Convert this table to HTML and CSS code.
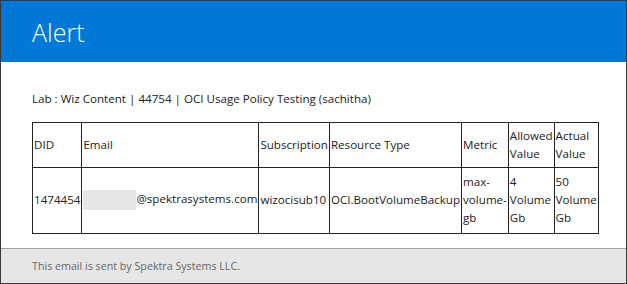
FILE: index.html
```html
<!DOCTYPE html>
<html lang="en">
<head>
    <meta charset="UTF-8">
    <meta name="viewport" content="width=device-width, initial-scale=1.0">
    <title>Alert</title>
    <link rel="stylesheet" href="styles.css">
</head>
<body>
    <div class="mail">
        <div class="header">
            <h1>Alert</h1>
        </div>
        <div class="content">
            <p class="lab">Lab : Wiz Content | 44754 | OCI Usage Policy Testing (sachitha)</p>
            <table class="usage">
                <tr>
                    <td>DID</td>
                    <td>Email</td>
                    <td>Subscription</td>
                    <td>Resource Type</td>
                    <td>Metric</td>
                    <td>Allowed Value</td>
                    <td>Actual Value</td>
                </tr>
                <tr>
                    <td class="body-cell">1474454</td>
                    <td class="email body-cell"><span class="redacted"></span>@spektrasystems.com</td>
                    <td class="body-cell">wizocisub10</td>
                    <td class="body-cell">OCI.BootVolumeBackup</td>
                    <td class="body-cell">max-volume-gb</td>
                    <td class="body-cell">4 Volume Gb</td>
                    <td class="body-cell">50 Volume Gb</td>
                </tr>
            </table>
        </div>
        <div class="footer">
            This email is sent by Spektra Systems LLC.
        </div>
    </div>
</body>
</html>
```

FILE: styles.css
```css
body {
    margin: 0;
    font-family: "Open Sans", "Noto Sans", sans-serif;
    color: #222;
}
.mail {
    width: 625px;
    height: 282px;
    border: 1px solid #3a3a3a;
    display: flex;
    flex-direction: column;
}
.header {
    background-color: #0078d7;
    height: 61px;
    padding-left: 31px;
    display: flex;
    align-items: center;
}
.header h1 {
    margin: 0;
    color: #fff;
    font-size: 25px;
    font-weight: 300;
}
.content {
    flex: 1;
    padding: 29px 28px 0 31px;
}
.lab {
    margin: 0 0 16px 0;
    font-size: 11.6px;
}
.usage {
    width: 100%;
    border-collapse: collapse;
    font-size: 11.6px;
    line-height: 18px;
}
.usage td {
    border: 1px solid #222;
    padding: 4px 1px;
    vertical-align: middle;
}
.usage .body-cell {
    padding: 5px 1px 6px 1px;
}
.usage .email {
    white-space: nowrap;
}
.redacted {
    display: inline-block;
    width: 53px;
    height: 20px;
    vertical-align: middle;
    background-color: #e6e6e6;
}
.footer {
    background-color: #e6e6e6;
    border-top: 1px solid #a0a0a0;
    height: 34px;
    padding-left: 31px;
    display: flex;
    align-items: center;
    font-size: 10.7px;
    color: #666;
}
```
